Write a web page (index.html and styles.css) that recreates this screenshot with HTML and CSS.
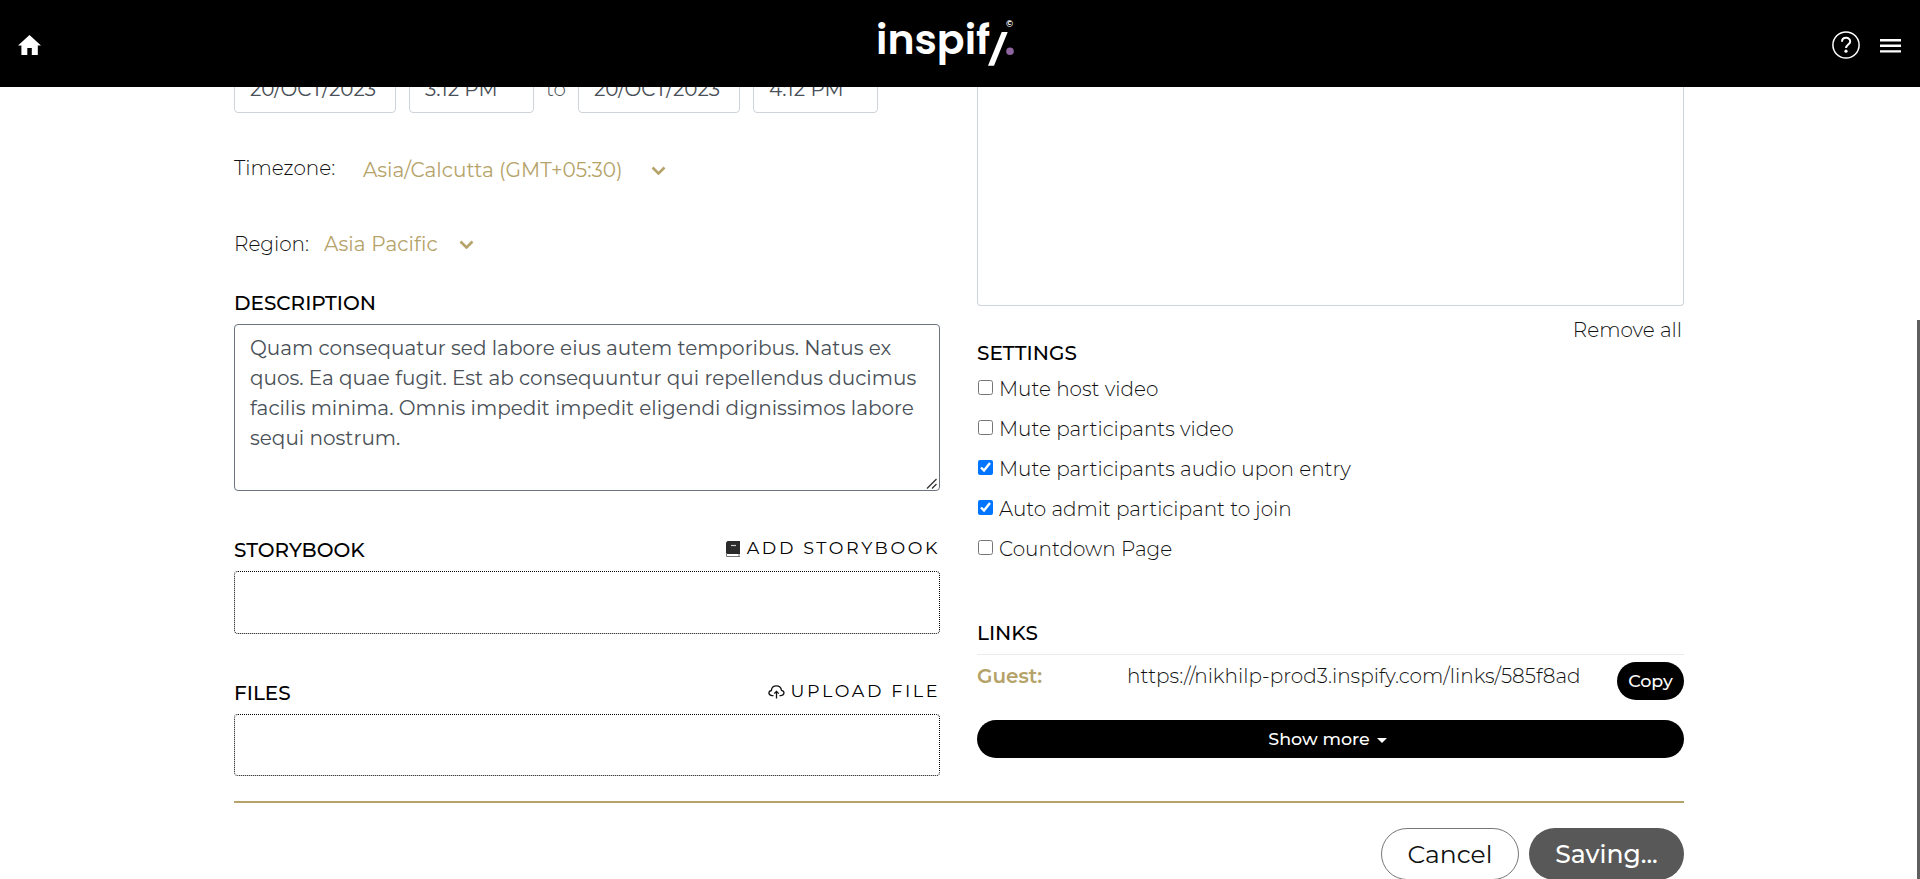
FILE: index.html
```html
<!DOCTYPE html>
<html lang="en">
<head>
<meta charset="utf-8">
<title>inspify</title>
<link rel="stylesheet" href="styles.css">
</head>
<body>
<header class="topbar">
  <svg class="home" viewBox="0 0 23 20"><path fill="#fff" d="M11.500 0 23 10.500h-3.200V20h-6v-7H9.300v7H3.400v-9.500H0z"/></svg>
  <div class="logo"><span class="logo-text">inspif</span>
    <svg class="logo-mark" viewBox="0 0 28 48"><path fill="#fff" d="M15.700 14h6L8 47.700H2z"/><circle cx="24" cy="33.300" r="3.800" fill="#8f65a0"/></svg>
    <span class="logo-copy">©</span>
  </div>
  <div class="top-actions">
    <svg class="help" viewBox="0 0 28 28" fill="none" stroke="#fff"><circle cx="14" cy="14" r="13.100" stroke-width="1.500"/><path stroke-width="2" d="M10 10.800c0-5.200 8.200-5.200 8.200-.4 0 3-3.900 3.200-4.200 6.600"/><circle cx="14" cy="20.200" r="1.600" fill="#fff" stroke="none"/></svg>
    <svg class="burger" viewBox="0 0 21 14"><path fill="#fff" d="M0 0h21v2.400H0zM0 5.600h21V8H0zM0 11.200h21v2.400H0z"/></svg>
  </div>
</header>
<main class="page">
  <div class="columns">
    <section class="col">
      <div class="dates">
        <div class="field date">20/OCT/2023</div>
        <div class="field time">3:12 PM</div>
        <span class="to">to</span>
        <div class="field date">20/OCT/2023</div>
        <div class="field time">4:12 PM</div>
      </div>
      <div class="picker tz"><span class="label">Timezone:</span><span class="gold">Asia/Calcutta (GMT+05:30)</span><svg class="chev" viewBox="0 0 15 9"><path d="M1.500 1.500l6 6 6-6"/></svg></div>
      <div class="picker rg"><span class="label">Region:</span><span class="gold">Asia Pacific</span><svg class="chev" viewBox="0 0 15 9"><path d="M1.500 1.500l6 6 6-6"/></svg></div>
      <h2 class="title t-desc">DESCRIPTION</h2>
      <div class="textarea">Quam consequatur sed labore eius autem temporibus. Natus ex quos. Ea quae fugit. Est ab consequuntur qui repellendus ducimus facilis minima. Omnis impedit impedit eligendi dignissimos labore sequi nostrum.<svg class="grip" viewBox="0 0 11 11"><path d="M1 10.500 10.500 1M6 10.500 10.500 6"/></svg></div>
      <div class="head"><h2 class="title">STORYBOOK</h2><span class="add"><svg class="book" viewBox="0 0 14 16"><path fill="#2b2b2b" d="M1.500 0H14v13H0V1.500z"/><path stroke="#ccc" stroke-width="1.200" d="M5 4.500h5"/><path fill="none" stroke="#777" d="M.5 12v3.500H14M13 13v2"/></svg>ADD STORYBOOK</span></div>
      <div class="drop"></div>
      <div class="head"><h2 class="title">FILES</h2><span class="add"><svg class="cloud" viewBox="0 0 17 14"><path fill="none" stroke="#111" stroke-width="1.300" d="M5.500 10.600H4C.2 10.200-.2 6.300 3.300 5.500 4-.6 12.600-.6 13.500 5.300c3.400.6 3.300 4.900-.5 5.300H11.500M8.500 13.500V6.500M6.200 8.600l2.300-2.300 2.300 2.300"/></svg>UPLOAD FILE</span></div>
      <div class="drop short"></div>
    </section>
    <section class="col">
      <div class="panel"></div>
      <div class="remove">Remove all</div>
      <h2 class="title t-set">SETTINGS</h2>
      <label class="opt"><input type="checkbox">Mute host video</label>
      <label class="opt"><input type="checkbox">Mute participants video</label>
      <label class="opt"><input type="checkbox" checked>Mute participants audio upon entry</label>
      <label class="opt"><input type="checkbox" checked>Auto admit participant to join</label>
      <label class="opt"><input type="checkbox">Countdown Page</label>
      <h2 class="title t-links">LINKS</h2>
      <div class="link"><span class="guest">Guest:</span><span>https://nikhilp-prod3.inspify.com/links/585f8ad</span><button class="copy">Copy</button></div>
      <button class="more">Show more<i class="caret"></i></button>
    </section>
  </div>
  <div class="footer"><button class="cancel">Cancel</button><button class="saving">Saving...</button></div>
</main>
<div class="thumb"></div>
</body>
</html>
```
FILE: styles.css
```css
* { box-sizing: border-box; }
body { margin: 0; height: 879px; overflow: hidden; background: #fff; font: 300 20px/20px Montserrat, Inter, sans-serif; color: #111; }
h2, button { margin: 0; font: inherit; }
svg { display: block; flex: none; }
span { white-space: nowrap; }
.topbar { height: 87px; background: #000; display: grid; grid-template-columns: 858px 140px 1fr; padding: 0 19px 0 18px; }
.home { width: 23px; height: 20px; margin-top: 35px; }
.logo { display: flex; height: 80px; color: #fff; padding-left: 0; }
.logo-text { width: 118px; flex: none; font: 600 41px/50px Poppins, Montserrat, sans-serif; margin-top: 15px; letter-spacing: 0; }
.logo-mark { width: 28px; height: 48px; margin: 18px 0 0 -8px; }
.logo-copy { font-size: 9px; font-weight: 600; line-height: 10px; margin: 19px 0 0 -8px; }
.top-actions { display: flex; justify-content: flex-end; gap: 20px; }
.help { width: 28px; height: 28px; margin-top: 31px; }
.burger { width: 21px; height: 14px; margin-top: 39px; }
.page { height: 792px; overflow: hidden; padding: 0 236px 0 234px; }
.columns { display: grid; grid-template-columns: 706px 707px; column-gap: 37px; height: 716px; border-bottom: 2px solid #b5a36a; }
.col { display: flex; flex-direction: column; }
.dates { display: flex; align-items: center; margin-top: -22px; font-weight: 400; color: #495057; }
.field { height: 48px; border: 1px solid #ced4da; border-radius: 4px; padding-left: 15px; line-height: 46px; }
.date { width: 162px; }
.time { width: 125px; margin-left: 13px; }
.to { width: 44px; text-align: center; font-weight: 300; }
.picker { display: flex; align-items: center; height: 40px; }
.tz { width: 432px; margin-top: 35px; }
.rg { width: 240px; margin-top: 36px; }
.gold { color: #b5a36a; font-weight: 400; }
.rg .gold { letter-spacing: 0.15px; }
.tz .gold, .tz .chev { margin-top: 4px; }
.tz .label { width: 129px; }
.rg .label { width: 90px; }
.chev { width: 15px; height: 9px; margin-left: auto; fill: none; stroke: #b5a36a; stroke-width: 2.6; }
.title { font-weight: 500; color: #000; line-height: 20px; }
.t-desc { margin-top: 29px; }
.textarea { height: 167px; margin-top: 11px; border: 1px solid #6c757d; border-radius: 4px; padding: 8px 15px; position: relative; line-height: 30px; font-weight: 400; color: #495057; }
.grip { position: absolute; right: 2px; bottom: 1px; width: 11px; height: 11px; fill: none; stroke: #333; stroke-width: 1.3; }
.head { display: flex; justify-content: space-between; margin-top: 49px; height: 20px; }
.add { display: flex; font-size: 17.5px; font-weight: 400; letter-spacing: 2.6px; color: #000; height: 16px; line-height: 16px; }
.book { width: 14px; height: 16px; margin: 1px 7px 0 0; }
.cloud { width: 17px; height: 14px; margin: 2px 6px 0 0; }
.drop { height: 63px; margin-top: 11px; border: 1px dotted #000; border-radius: 4px; }
.short { height: 62px; }
.panel { height: 219px; border: 1px solid #ced4da; border-top: 0; border-radius: 0 0 4px 4px; }
.remove { margin-top: 14px; text-align: right; padding-right: 2px; }
.t-set { margin: 3px 0 6px; }
.opt { display: flex; align-items: center; height: 40px; }
.opt input { width: 15px; height: 15px; margin: 0 6px 3px 1px; }
.t-links { margin-top: 54px; }
.link { display: flex; margin-top: 11px; border-top: 1px solid #ebebeb; padding-top: 7px; line-height: 28px; }
.guest { width: 150px; color: #b5a36a; font-weight: 600; }
.copy { margin-left: auto; width: 67px; height: 38px; padding: 0; border: 0; border-radius: 19px; background: #000; color: #fff; font-size: 17.5px; font-weight: 500; }
.more { display: flex; justify-content: center; align-items: center; margin-top: 20px; height: 38px; border: 0; border-radius: 19px; background: #000; color: #fff; font-size: 17.5px; font-weight: 500; padding: 0 12px 0 6px; }
.caret { border: 5px solid transparent; border-top-color: #fff; border-bottom: 0; margin: 3px 0 0 7px; }
.footer { display: flex; justify-content: flex-end; gap: 10px; padding-top: 25px; }
.footer button { height: 52px; border-radius: 26px; font-size: 25px; font-weight: 400; padding: 0; }
.cancel { width: 138px; border: 1px solid #777; background: #fff; color: #111; }
.footer .saving { width: 155px; border: 0; background: #585858; color: #fff; font-weight: 500; }
.thumb { position: absolute; right: 0; top: 320px; width: 3px; height: 559px; background: #5f5f5f; }
```
